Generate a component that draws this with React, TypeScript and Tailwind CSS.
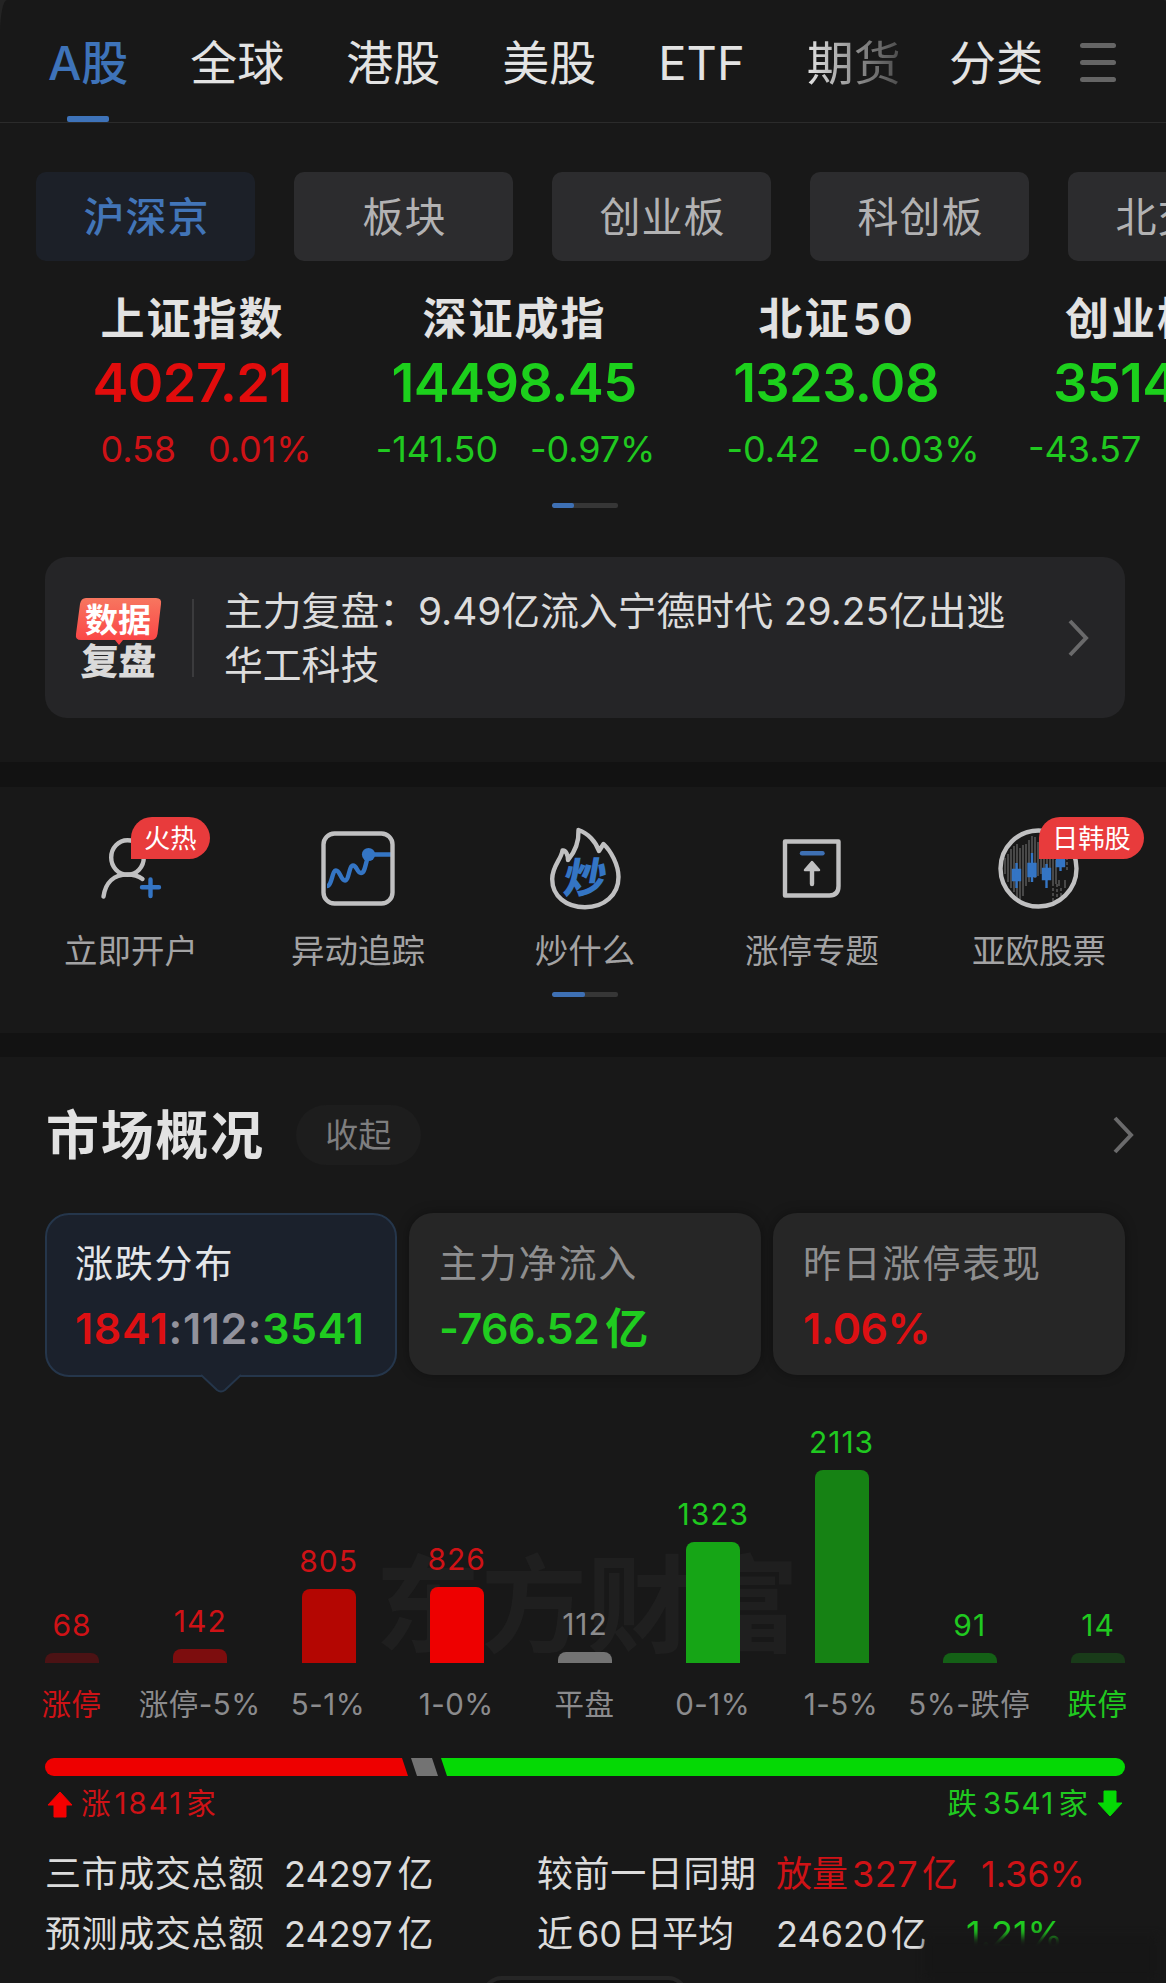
import React from 'react';

const UP = 'text-[#cf1216]';
const DOWN = 'text-[#20c920]';

const boards = ['沪深京', '板块', '创业板', '科创板', '北交所'];

const indices = [
  { name: '上证指数', value: '4027.21', diff: '0.58', pct: '0.01%', up: true },
  { name: '深证成指', value: '14498.45', diff: '-141.50', pct: '-0.97%', up: false },
  { name: '北证 50', value: '1323.08', diff: '-0.42', pct: '-0.03%', up: false },
];

const bars = [
  { label: '涨停', count: 68, height: 10, bar: 'bg-[#4b1214]', text: UP, labelText: UP },
  { label: '涨停-5%', count: 142, height: 14, bar: 'bg-[#7d0d0e]', text: UP, labelText: 'text-[#8b8b8d]' },
  { label: '5-1%', count: 805, height: 74, bar: 'bg-[#b40602]', text: UP, labelText: 'text-[#8b8b8d]' },
  { label: '1-0%', count: 826, height: 76, bar: 'bg-[#ee0000]', text: UP, labelText: 'text-[#8b8b8d]' },
  { label: '平盘', count: 112, height: 11, bar: 'bg-[#737373]', text: 'text-[#8b8b8d]', labelText: 'text-[#8b8b8d]' },
  { label: '0-1%', count: 1323, height: 121, bar: 'bg-[#16a516]', text: DOWN, labelText: 'text-[#8b8b8d]' },
  { label: '1-5%', count: 2113, height: 193, bar: 'bg-[#168214]', text: DOWN, labelText: 'text-[#8b8b8d]' },
  { label: '5%-跌停', count: 91, height: 10, bar: 'bg-[#146016]', text: DOWN, labelText: 'text-[#8b8b8d]' },
  { label: '跌停', count: 14, height: 10, bar: 'bg-[#193b19]', text: DOWN, labelText: DOWN },
];

const Pager = ({ active }: { active: string }) => (
  <div className="ml-[552px] h-[5px] w-[66px] overflow-hidden rounded-[2px] bg-[#363636]">
    <div className={`h-full rounded-[2px] bg-[#3e70b4] ${active}`} />
  </div>
);

const Chevron = () => (
  <svg width="22" height="40" viewBox="0 0 22 40" fill="none" stroke="#6a6a6b" strokeWidth="4">
    <path d="M3 3 L19 20 L3 37" />
  </svg>
);

const AccountIcon = () => (
  <svg width="100" height="90" viewBox="0 0 100 90" fill="none" stroke="#c0c0c1" strokeWidth="4.4" strokeLinecap="round">
    <ellipse cx="46.500" cy="35.500" rx="16.3" ry="17.2" />
    <path d="M22.500 74.5 C24.500 60 33.500 52.5 46.500 52.5 C52.500 52.5 57.500 54 61.500 57" />
    <path d="M69.500 57.5 V74 M61 65.3 H78" stroke="#3475c4" />
  </svg>
);

const TrackIcon = () => (
  <svg width="100" height="90" viewBox="0 0 100 90" fill="none" strokeWidth="4.4">
    <path
      d="M19 64 C24 64 24 48.500 28 48.500 C32 48.500 33 58.500 37 58.500 C41 58.500 41 43.500 45 43.500 C49 43.500 49 51 53 51 C57 51 57 43 60.500 33 M60 32.500 H84"
      stroke="#3475c4"
    />
    <circle cx="60.500" cy="32.500" r="6.600" fill="#3475c4" />
    <rect x="15.500" y="11.500" width="69" height="70" rx="11" stroke="#c0c0c1" />
  </svg>
);

const FlameIcon = () => (
  <svg width="100" height="90" viewBox="0 0 100 90" fill="none">
    <path
      d="M50 85.200 C31 85.200 17.200 74 17.200 57 C17.200 44 26 38 27.500 28.500 C31 28 33 33 33 38 C39 31 44 20 43.500 8 C53 11 61 20 64 29 L68.500 22 C76 29 83.500 43 83.500 55 C83.500 73 69 85.200 50 85.200 Z"
      stroke="#c0c0c1"
      strokeWidth="4.400"
      strokeLinejoin="round"
    />
    <text
      x="0"
      y="0"
      transform="translate(26.500 71) skewX(-10)"
      fontSize="42"
      fontWeight="900"
      fill="#3475c4"
      fontFamily="'Noto Sans CJK SC', sans-serif"
    >
      炒
    </text>
  </svg>
);

const LimitIcon = () => (
  <svg width="100" height="90" viewBox="0 0 100 90" fill="none" stroke="#c0c0c1" strokeWidth="4.400" strokeLinecap="round" strokeLinejoin="round">
    <path d="M23 19.500 H76.500 V64 Q76.500 73.500 67.500 73.500 H23 Z" />
    <path d="M40 31.300 H60.500" stroke="#3e70b4" />
    <path d="M50 62 V44" />
    <path d="M50 40 L43 48 H57 Z" fill="#c0c0c1" strokeWidth="2.500" />
  </svg>
);

const GlobeIcon = () => (
  <svg width="100" height="90" viewBox="0 0 100 90" fill="none">
    <g stroke="#484848" strokeWidth="2">
      <path d="M16 36V52M19 32V60M22 27V66M25 24V70M28 22V76M31 26V78M34 23V74M37 22V64M40 18V60M43 14V58M46 15V56M49 20V54M52 24V52M55 28V54M58 30V58M61 32V58M64 34V64M67 38V62M70 58V64M76 58V66" />
      <path d="M64 66V80M68 62V78M72 66V76M78 30V48" strokeDasharray="3 2" />
    </g>
    <g stroke="#3475c4" strokeWidth="2.400" fill="#3475c4">
      <path d="M27.500 41V66M43 31V60M57.500 42V66M71.500 36V49" />
      <path d="M24 48h7v10h-7zM39.500 42h7v12h-7zM54 47h7v10h-7zM68 36h7v8h-7z" />
    </g>
    <circle cx="49.500" cy="46.500" r="38" stroke="#c0c0c1" strokeWidth="4.400" />
  </svg>
);

const shortcuts = [
  { label: '立即开户', icon: <AccountIcon />, badge: '火热' },
  { label: '异动追踪', icon: <TrackIcon /> },
  { label: '炒什么', icon: <FlameIcon /> },
  { label: '涨停专题', icon: <LimitIcon /> },
  { label: '亚欧股票', icon: <GlobeIcon />, badge: '日韩股' },
];

const Header = () => (
  <nav className="relative flex h-[123px] items-center border-b border-[#2b2b2b] pt-[3px] pl-[48px] text-[47px] leading-[56px] text-[#e3e3e3]">
    <div className="flex w-[853px] gap-[62px] whitespace-nowrap">
      <span className="font-medium text-[#3e73b9]">A股</span>
      <span>全球</span>
      <span>港股</span>
      <span>美股</span>
      <span>ETF</span>
      <span className="bg-linear-to-r from-[#e3e3e3] to-[#4a4a4a] bg-clip-text text-transparent">期货</span>
    </div>
    <span className="ml-[48px]">分类</span>
    <div className="ml-[37px] flex flex-col gap-[12px]">
      <div className="h-[5px] w-[36px] rounded-full bg-[#656565]" />
      <div className="h-[5px] w-[36px] rounded-full bg-[#656565]" />
      <div className="h-[5px] w-[36px] rounded-full bg-[#656565]" />
    </div>
    <div className="absolute top-[116px] left-[67px] h-[6px] w-[42px] rounded-[2px] bg-[#3e73b9]" />
  </nav>
);

const Indices = () => (
  <div className="mt-[35px] flex pl-[31px] whitespace-nowrap">
    {indices.map((item) => (
      <div key={item.name} className="w-[322px] shrink-0 text-center">
        <div className="pl-px text-[44px] leading-[46px] font-bold tracking-[2px] text-[#e2e2e2] [word-spacing:-10px]">{item.name}</div>
        <div className={`mt-[14px] text-[54px] leading-[54px] font-semibold tracking-[-0.600px] ${item.up ? 'text-[#e10c0c]' : 'text-[#1cd01c]'}`}>
          {item.value}
        </div>
        <div className={`mt-[21px] grid grid-cols-2 gap-[32px] text-[36px] leading-[36px] tracking-[-0.100px] ${item.up ? UP : DOWN}`}>
          <span className="flex justify-end">{item.diff}</span>
          <span className="text-left">{item.pct}</span>
        </div>
      </div>
    ))}
    <div className="w-[169px] shrink-0">
      <div className="pl-[68px] text-[44px] leading-[46px] font-bold tracking-[2px] text-[#e2e2e2]">创业板指</div>
      <div className="mt-[14px] pl-[56px] text-[54px] leading-[54px] font-semibold tracking-[-0.600px] text-[#1cd01c]">3514</div>
      <div className={`mt-[21px] pl-[31px] text-[36px] leading-[36px] ${DOWN}`}>-43.57</div>
    </div>
  </div>
);

const ReviewCard = () => (
  <div className="mt-[49px] mr-[41px] ml-[45px] flex h-[161px] items-center rounded-[22px] bg-[#252527]">
    <div className="ml-[29px] flex w-[88px] flex-col items-center">
      <div className="relative flex h-[42px] w-[82px] items-center justify-center">
        <svg className="absolute inset-0 overflow-visible" width="82" height="48" viewBox="0 0 82 48">
          <defs>
            <linearGradient id="tag" x1="0" y1="0" x2="0" y2="1">
              <stop offset="0" stopColor="#f7765f" />
              <stop offset="1" stopColor="#fb4144" />
            </linearGradient>
          </defs>
          <path d="M9 1 H79 Q85 1 84 7 L80.500 37 Q79.500 43 74 43 H46 L42 48 L38 43 H4 Q-2 43 -1 37 L3 7 Q4 1 9 1 Z" fill="url(#tag)" />
        </svg>
        <span className="relative top-[2px] text-[33px] leading-[40px] font-bold text-white">数据</span>
      </div>
      <div className="mt-[6px] -skew-x-3 text-[37.500px] leading-[33px] font-black text-[#dadada]">复盘</div>
    </div>
    <div className="ml-[30px] h-[78px] w-[2px] bg-[#3b3b3d]" />
    <p className="ml-[30px] w-[800px] text-[38.800px] leading-[54px] text-[#dcdcdc]">
      主力复盘：9.49亿流入宁德时代 29.25亿出逃
      <br />
      华工科技
    </p>
    <div className="ml-[43px]">
      <Chevron />
    </div>
  </div>
);

const Shortcuts = () => (
  <section className="h-[246px] pt-[35px]">
    <div className="flex pl-[17px]">
      {shortcuts.map((item) => (
        <div key={item.label} className="relative flex w-[227px] shrink-0 flex-col items-center">
          {item.icon}
          {item.badge && (
            <span className="absolute -top-[5px] left-[114px] flex h-[42px] items-center rounded-[21px] rounded-bl-none bg-[#e83b3c] px-[13px] pt-[2px] text-[26.300px] leading-[40px] whitespace-nowrap text-white">
              {item.badge}
            </span>
          )}
          <span className="mt-[22px] ml-px text-[33.500px] leading-[34px] text-[#a3a3a4]">{item.label}</span>
        </div>
      ))}
    </div>
    <div className="mt-[24px]">
      <Pager active="w-[33px]" />
    </div>
  </section>
);

const SummaryCards = () => (
  <div className="mt-[48px] mr-[41px] ml-[45px] grid grid-cols-3 gap-[12px]">
    <div className="relative h-[164px] rounded-[24px] border-2 border-[#25364b] bg-[#1b212c] pt-[28px] pl-[28px]">
      <div className="text-[38px] leading-[40px] tracking-[1.800px] text-[#e4e6e9]">涨跌分布</div>
      <div className="mt-[24px] text-[43px] leading-[42px] font-semibold tracking-[0.600px]">
        <span className="text-[#dd1013]">1841</span>
        <span className="text-[#92929c]">:112:</span>
        <span className="text-[#20cc20]">3541</span>
      </div>
      <svg className="absolute -bottom-[19px] left-[154px]" width="40" height="20" viewBox="0 0 40 20">
        <path d="M0 0 L16 16 Q20 20 24 16 L40 0" fill="#1b212c" />
        <path d="M0 1 L16 16 Q20 19 24 16 L40 1" fill="none" stroke="#25364b" strokeWidth="2" />
      </svg>
    </div>
    <div className="h-[162px] rounded-[24px] bg-[#262626] pt-[30px] pl-[30px] shadow-[0_0_12px_rgba(0,0,0,0.35)]">
      <div className="text-[38px] leading-[40px] tracking-[1.800px] text-[#8e8e8f]">主力净流入</div>
      <div className="mt-[24px] text-[43px] leading-[42px] font-semibold tracking-[-0.500px] text-[#20cc20]">
        -766.52<span className="ml-[6px] font-bold">亿</span>
      </div>
    </div>
    <div className="h-[162px] rounded-[24px] bg-[#262626] pt-[30px] pl-[30px] shadow-[0_0_12px_rgba(0,0,0,0.35)]">
      <div className="text-[38px] leading-[40px] tracking-[1.800px] text-[#8e8e8f]">昨日涨停表现</div>
      <div className="mt-[24px] text-[43px] leading-[42px] font-semibold tracking-[-0.500px] text-[#dd1013]">1.06%</div>
    </div>
  </div>
);

const Distribution = () => (
  <div className="relative mt-[38px] mr-[41px] ml-[45px]">
    <div className="absolute top-[138px] left-[330px] text-[106px] leading-[106px] font-bold text-[#1f1f1f]">东方财富</div>
    <div className="relative flex h-[248px] items-end justify-between">
      {bars.map((item) => (
        <div key={item.label} className="flex w-[54px] flex-col items-center">
          <span className={`text-[30px] leading-[30px] tracking-[1px] ${item.text}`}>{item.count}</span>
          <div className={`mt-[13px] w-full rounded-t-[8px] ${item.bar}`} style={{ height: item.height }} />
        </div>
      ))}
    </div>
    <div className="relative mt-[26px] flex justify-between">
      {bars.map((item) => (
        <div key={item.label} className="flex w-[54px] justify-center">
          <span className={`-ml-px text-[29.500px] leading-[30px] tracking-[0.500px] whitespace-nowrap ${item.labelText}`}>{item.label}</span>
        </div>
      ))}
    </div>
  </div>
);

const Balance = () => (
  <div className="mt-[39px] mr-[41px] ml-[45px]">
    <svg className="block" width="1080" height="18" viewBox="0 0 1080 18">
      <path d="M9 0 H357 L363 18 H9 A9 9 0 0 1 9 0 Z" fill="#ee0000" />
      <path d="M366 0 H387 L393 18 H372 Z" fill="#737373" />
      <path d="M396 0 H1071 A9 9 0 0 1 1071 18 H402 Z" fill="#05d905" />
    </svg>
    <div className="mt-[11px] flex justify-between text-[29.500px] leading-[32px]">
      <div className={`flex items-center pl-[2px] ${UP}`}>
        <svg className="mt-[3px] mr-[8px]" width="26" height="27" viewBox="0 0 26 27">
          <path d="M13 1 L25 14 H19 V26 H7 V14 H1 Z" fill="#f40000" stroke="#f40000" strokeLinejoin="round" />
        </svg>
        涨<span className="mr-[3px] ml-[4px] tracking-[2px]">1841</span>家
      </div>
      <div className={`flex items-center pr-[2px] ${DOWN}`}>
        跌<span className="mr-[4px] ml-[6px] tracking-[1.200px]">3541</span>家
        <svg className="ml-[9px]" width="26" height="27" viewBox="0 0 26 27">
          <path d="M13 26 L25 13 H19 V1 H7 V13 H1 Z" fill="#05d905" stroke="#05d905" strokeLinejoin="round" />
        </svg>
      </div>
    </div>
  </div>
);

const Turnover = () => (
  <div className="relative mt-[25px] ml-[45px] grid grid-cols-[239px_253px_239px_205px_120px] text-[36px] leading-[60px] whitespace-nowrap text-[#dcdcdc]">
    <span className="tracking-[0.600px]">三市成交总额</span>
    <span>24297<span className="ml-[5px]">亿</span></span>
    <span className="tracking-[0.600px]">较前一日同期</span>
    <span className={UP}>放量<span className="mx-[4px] tracking-[0.500px]">327</span>亿</span>
    <span className={UP}>1.36%</span>
    <span className="tracking-[0.600px]">预测成交总额</span>
    <span>24297<span className="ml-[5px]">亿</span></span>
    <span>近<span className="mx-[4px]">60</span>日平均</span>
    <span>24620<span className="ml-[3px]">亿</span></span>
    <span className="-ml-[15px] text-[#20c920]">1.21%</span>
    <div className="absolute top-[92px] left-[880px] h-[44px] w-[232px] bg-[#161616] blur-[4px]" />
  </div>
);

export default function App() {
  return (
    <div className="h-[1983px] w-[1166px] overflow-hidden bg-[#242424]">
      <main className="h-full overflow-hidden rounded-tl-[7px_34px] rounded-tr-[3px] bg-[#181818] font-[Inter,'Noto_Sans_CJK_SC',sans-serif]">
        <Header />
        <div className="mt-[49px] flex gap-[39px] pl-[36px]">
          {boards.map((board, i) => (
            <div
              key={board}
              className={`h-[89px] w-[219px] shrink-0 rounded-[10px] pl-[2px] text-center text-[41px] leading-[91px] tracking-[1px] ${
                i === 0 ? 'bg-[#1c2028] font-medium text-[#4275b8]' : 'bg-[#2c2c2e] text-[#b2b2b3]'
              }`}
            >
              {board}
            </div>
          ))}
        </div>
        <Indices />
        <div className="mt-[36px]">
          <Pager active="w-[22px]" />
        </div>
        <ReviewCard />
        <div className="mt-[44px] h-[25px] bg-[#121212]" />
        <Shortcuts />
        <div className="h-[24px] bg-[#121212]" />
        <div className="mt-[48px] flex h-[60px] items-center pl-[46px]">
          <h2 className="pt-[2px] text-[53px] leading-[62px] font-bold tracking-[1.700px] text-[#e2e2e2]">市场概况</h2>
          <span className="ml-[31px] h-[60px] w-[125px] rounded-full bg-[#1d1d1d] text-center text-[33px] leading-[60px] text-[#7e7e7f]">收起</span>
          <div className="mr-[32px] ml-auto">
            <Chevron />
          </div>
        </div>
        <SummaryCards />
        <Distribution />
        <Balance />
        <Turnover />
        <div className="mt-[12px] ml-[482px] h-[40px] w-[206px] rounded-[20px] border-4 border-[#262626] bg-[#121212]" />
      </main>
    </div>
  );
}
